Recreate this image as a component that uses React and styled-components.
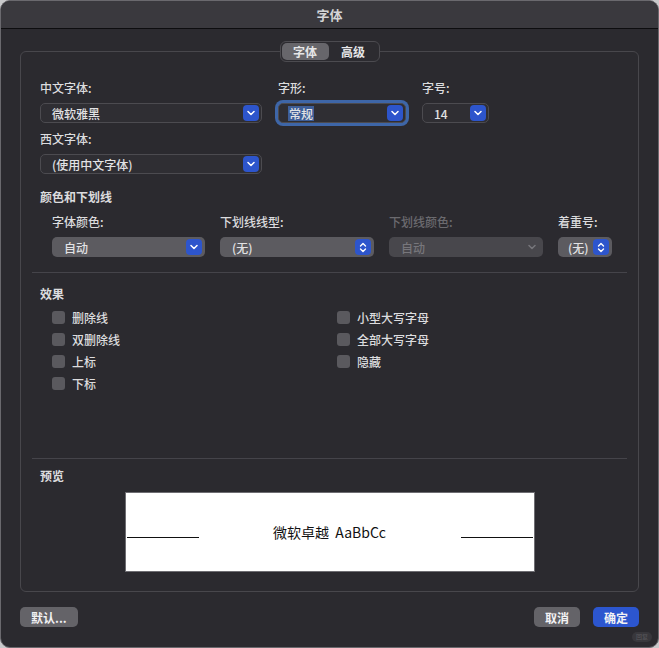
import React from "react";
import styled, { createGlobalStyle } from "styled-components";

const GlobalStyle = createGlobalStyle`
  html, body {
    margin: 0;
    padding: 0;
    background: #c9c9cb;
  }
  body {
    font-family: "Noto Sans CJK SC", "Inter", "Liberation Sans", sans-serif;
    -webkit-font-smoothing: antialiased;
  }
`;

const Window = styled.div`
  position: relative;
  width: 659px;
  height: 648px;
  box-sizing: border-box;
  background: #2b2a2f;
  border: 1px solid #6a696e;
  border-radius: 10px;
  overflow: hidden;
  display: flex;
  flex-direction: column;
  color: #dcdcde;
`;

const TitleBar = styled.div`
  height: 27px;
  flex: none;
  background: #3a393e;
  border-bottom: 1px solid #0d0d0f;
  display: flex;
  align-items: center;
  justify-content: center;
  font-size: 13px;
  font-weight: 600;
  color: #d4d4d6;
`;

const Body = styled.div`
  flex: 1;
  display: flex;
  flex-direction: column;
  padding: 22px 19px 19px 19px;
`;

const Group = styled.div`
  border: 1px solid #48474c;
  border-radius: 6px;
  display: flex;
  flex-direction: column;
  padding: 0 0 19px 0;
`;

const Tabs = styled.div`
  align-self: center;
  margin-top: -11px;
  display: flex;
  height: 21px;
  box-sizing: border-box;
  padding: 1px;
  background: #2c2b30;
  border: 1px solid #4c4b50;
  border-radius: 6px;
`;

const Tab = styled.div`
  width: ${({ $w }) => $w}px;
  display: flex;
  align-items: center;
  justify-content: center;
  font-size: 12px;
  font-weight: 600;
  border-radius: 5px;
  color: #e6e6e8;
  background: ${({ $active }) => ($active ? "#67666b" : "transparent")};
`;

const Section = styled.div`
  display: flex;
  flex-direction: column;
  padding-left: ${({ $indent }) => $indent || 19}px;
  padding-right: 19px;
  margin-top: ${({ $top }) => $top || 0}px;
`;

const Row = styled.div`
  display: flex;
  gap: ${({ $gap }) => $gap || 15}px;
  margin-top: ${({ $top }) => $top || 0}px;
  margin-left: ${({ $indent }) => $indent || 0}px;
`;

const Field = styled.div`
  display: flex;
  flex-direction: column;
  gap: 7px;
  width: ${({ $w }) => $w}px;
`;

const Label = styled.div`
  font-size: 12px;
  line-height: 16px;
  height: 16px;
  font-weight: 500;
  white-space: nowrap;
  color: ${({ $disabled }) => ($disabled ? "#6b6a6f" : "#dcdcde")};
`;

const Heading = styled.div`
  font-size: 12px;
  line-height: 16px;
  font-weight: 700;
  color: #dcdcde;
  margin-top: ${({ $top }) => $top || 0}px;
`;

const Select = styled.div`
  position: relative;
  height: 20px;
  box-sizing: border-box;
  border-radius: 5px;
  display: flex;
  align-items: center;
  justify-content: space-between;
  padding: 0 2px 0 ${({ $pad }) => $pad || 10}px;
  font-size: 12px;
  font-weight: 500;
  background: ${({ $kind }) =>
    $kind === "combo" ? "#2f2e33" : $kind === "disabled" ? "#48474c" : "#5c5b60"};
  border: 1px solid
    ${({ $kind }) => ($kind === "combo" ? "#4c4b50" : "transparent")};
  color: ${({ $kind }) => ($kind === "disabled" ? "#77767b" : "#e2e2e4")};
  box-shadow: ${({ $focus }) => ($focus ? "0 0 0 3px #3e66a8" : "none")};
`;

const Picked = styled.span`
  background: ${({ $selected }) => ($selected ? "#3e5e98" : "transparent")};
  padding: 0 1px;
  line-height: 15px;
`;

const Arrow = styled.div`
  width: 16px;
  height: 16px;
  border-radius: 4px;
  background: ${({ $plain }) => ($plain ? "transparent" : "#2d55cc")};
  display: flex;
  align-items: center;
  justify-content: center;
  flex: none;
`;

const Separator = styled.div`
  height: 1px;
  background: #45444a;
  margin: ${({ $top }) => $top || 0}px 11px 0 11px;
`;

const Checks = styled.div`
  display: grid;
  grid-template-columns: 285px 1fr;
  grid-auto-flow: column;
  grid-template-rows: repeat(4, 22px);
  margin: 4px 0 0 12px;
`;

const Check = styled.label`
  display: flex;
  align-items: center;
  gap: 7px;
  font-size: 12px;
  font-weight: 500;
  color: #dcdcde;
`;

const Box = styled.span`
  width: 13px;
  height: 13px;
  border-radius: 3px;
  background: #5a595e;
  flex: none;
`;

const Preview = styled.div`
  align-self: center;
  width: 410px;
  height: 80px;
  box-sizing: border-box;
  margin-top: 8px;
  background: #ffffff;
  border: 1px solid #6e6d72;
  display: flex;
  align-items: center;
  padding: 0 1px;
  color: #111;
`;

const PreviewLine = styled.span`
  width: 72px;
  height: 1px;
  background: #111;
  margin-top: 11px;
  flex: none;
`;

const PreviewText = styled.div`
  flex: 1;
  text-align: center;
  font-size: 14px;
  white-space: pre;
  font-family: "Noto Sans CJK SC", "Open Sans", sans-serif;
`;

const Footer = styled.div`
  display: flex;
  align-items: center;
  margin-top: 15px;
  gap: 13px;
`;

const Button = styled.button`
  height: 20px;
  padding: 0 ${({ $pad }) => $pad || 11}px;
  border: none;
  border-radius: 5px;
  font-family: inherit;
  font-size: 12px;
  font-weight: 600;
  color: #f2f2f4;
  background: ${({ $primary }) => ($primary ? "#2c56cf" : "#646368")};
  margin-left: ${({ $push }) => ($push ? "auto" : "0")};
`;

const Badge = styled.div`
  position: absolute;
  right: 6px;
  bottom: 5px;
  width: 20px;
  height: 10px;
  border-radius: 5px;
  background: #38373c;
  color: #5b5a5f;
  font-size: 6px;
  line-height: 10px;
  text-align: center;
`;

const Chevron = ({ color = "#fff" }) => (
  <svg width="8" height="6" viewBox="0 0 8 6">
    <path
      d="M1 1.5 L4 4.5 L7 1.5"
      fill="none"
      stroke={color}
      strokeWidth="1.5"
      strokeLinecap="round"
      strokeLinejoin="round"
    />
  </svg>
);

const UpDown = () => (
  <svg width="8" height="11" viewBox="0 0 8 11">
    <path
      d="M1.5 4 L4 1.5 L6.5 4 M1.5 7 L4 9.5 L6.5 7"
      fill="none"
      stroke="#fff"
      strokeWidth="1.4"
      strokeLinecap="round"
      strokeLinejoin="round"
    />
  </svg>
);

const Dropdown = ({ value, kind, focus, selected, stepper, pad }) => (
  <Select $kind={kind} $focus={focus} $pad={pad}>
    <Picked $selected={selected}>{value}</Picked>
    {kind === "disabled" ? (
      <Arrow $plain>
        <Chevron color="#77767b" />
      </Arrow>
    ) : (
      <Arrow>{stepper ? <UpDown /> : <Chevron />}</Arrow>
    )}
  </Select>
);

const leftChecks = ["删除线", "双删除线", "上标", "下标"];
const rightChecks = ["小型大写字母", "全部大写字母", "隐藏"];

export default function App() {
  return (
    <>
      <GlobalStyle />
      <Window>
        <TitleBar>字体</TitleBar>
        <Body>
          <Group>
            <Tabs>
              <Tab $w={47} $active>
                字体
              </Tab>
              <Tab $w={49}>高级</Tab>
            </Tabs>

            <Section $top={18}>
              <Row $gap={16}>
                <Field $w={222}>
                  <Label>中文字体:</Label>
                  <Dropdown value="微软雅黑" kind="combo" />
                </Field>
                <Field $w={128}>
                  <Label>字形:</Label>
                  <Dropdown value="常规" kind="combo" focus selected pad={9} />
                </Field>
                <Field $w={67}>
                  <Label>字号:</Label>
                  <Dropdown value="14" kind="combo" />
                </Field>
              </Row>
              <Row $top={8}>
                <Field $w={222}>
                  <Label>西文字体:</Label>
                  <Dropdown value="(使用中文字体)" kind="combo" />
                </Field>
              </Row>

              <Heading $top={15}>颜色和下划线</Heading>
              <Row $top={9} $indent={12}>
                <Field $w={153}>
                  <Label>字体颜色:</Label>
                  <Dropdown value="自动" />
                </Field>
                <Field $w={154}>
                  <Label>下划线线型:</Label>
                  <Dropdown value="(无)" stepper />
                </Field>
                <Field $w={154}>
                  <Label $disabled>下划线颜色:</Label>
                  <Dropdown value="自动" kind="disabled" />
                </Field>
                <Field $w={54}>
                  <Label>着重号:</Label>
                  <Dropdown value="(无)" stepper pad={8} />
                </Field>
              </Row>
            </Section>

            <Separator $top={15} />

            <Section $top={13}>
              <Heading>效果</Heading>
              <Checks>
                {leftChecks.map((t) => (
                  <Check key={t}>
                    <Box />
                    {t}
                  </Check>
                ))}
                {rightChecks.map((t) => (
                  <Check key={t}>
                    <Box />
                    {t}
                  </Check>
                ))}
              </Checks>
            </Section>

            <Separator $top={64} />

            <Section $top={9}>
              <Heading>预览</Heading>
              <Preview>
                <PreviewLine />
                <PreviewText>{"微软卓越  AaBbCc"}</PreviewText>
                <PreviewLine />
              </Preview>
            </Section>
          </Group>

          <Footer>
            <Button>默认...</Button>
            <Button $push>取消</Button>
            <Button $primary>确定</Button>
          </Footer>
        </Body>
        <Badge>回复</Badge>
      </Window>
    </>
  );
}
